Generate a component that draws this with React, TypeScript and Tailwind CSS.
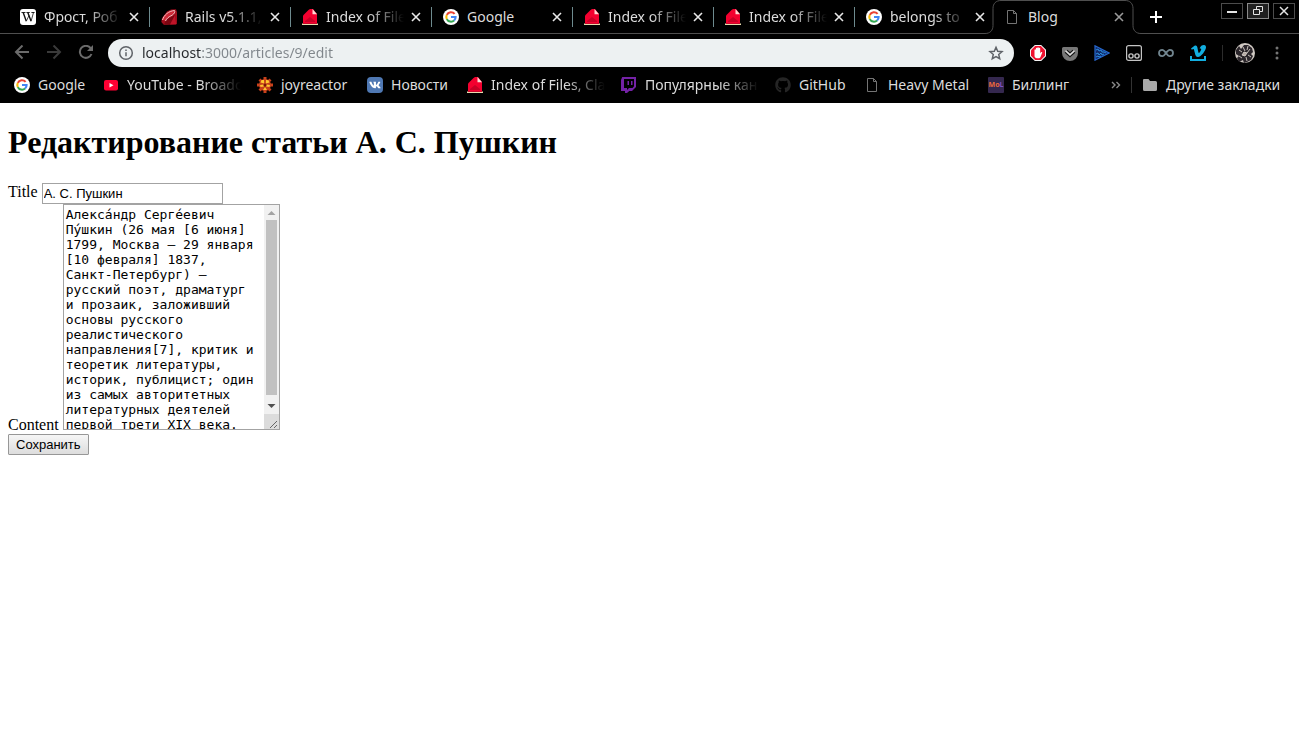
import type { ReactNode } from "react";
import { FaGithub, FaVk } from "react-icons/fa";

const ARTICLE = `Алекса́ндр Серге́евич Пу́шкин (26 мая [6 июня] 1799, Москва — 29 января [10 февраля] 1837, Санкт-Петербург) — русский поэт, драматург и прозаик, заложивший основы русского реалистического направления[7], критик и теоретик литературы, историк, публицист; один из самых авторитетных литературных деятелей первой трети XIX века.`;

function GoogleIcon() {
  return (
    <svg viewBox="0 0 16 16" className="size-4 shrink-0">
      <circle cx="8" cy="8" r="8" fill="#fff" />
      <g fill="none" strokeWidth="2.1">
        <path d="M11.6 4.9A4.7 4.7 0 0 0 3.8 5.9" stroke="#ea4335" />
        <path d="M3.8 5.9a4.7 4.7 0 0 0 0 4.2" stroke="#fbbc05" />
        <path d="M3.8 10.1a4.7 4.7 0 0 0 7.3 1.4" stroke="#34a853" />
        <path d="M11.1 11.5A4.6 4.6 0 0 0 12.6 8H8" stroke="#4285f4" />
      </g>
    </svg>
  );
}

function WikipediaIcon() {
  return (
    <svg viewBox="0 0 16 16" className="size-4 shrink-0">
      <rect width="16" height="16" rx="3" fill="#fff" />
      <g fill="none" stroke="#111">
        <path d="M1.5 3.5h4M6.4 3.5h3.4M11.4 3.5h3.2" strokeWidth="0.9" />
        <path d="M3.2 3.5 6.2 12M7.8 3.5 11 12" strokeWidth="1.4" />
        <path d="M6.2 12.4 9 6.5M11 12.4l2.5-8.9" strokeWidth="0.8" />
      </g>
    </svg>
  );
}

function RubyIcon() {
  return (
    <svg viewBox="0 0 16 16" className="size-4 shrink-0">
      <path d="M1 9 6 2.5 10 .5 15 .3 16 3v12L3 16 .3 13z" fill="#a00d1c" />
      <path d="M5 11 14 6l1.5 9L3 15.8z" fill="#7c0611" />
      <path d="m14 6-5 9.5h6.3z" fill="#be1428" />
      <path d="M1.500 10.500C4 4.500 7 2 13.500 1.500L12.500 5C9 6.500 6 9 4.500 12z" fill="#cf2a38" />
      <path d="M1.500 11C3 6 7.500 2 13.500 1.500c.8 1.500-.2 3.200-2.500 4.800C8 7.500 5.500 9.500 4.500 12" fill="none" stroke="#f4c5c5" />
    </svg>
  );
}

function HouseIcon() {
  return (
    <svg viewBox="0 0 16 16" className="size-4 shrink-0">
      <path d="M1 14V6.500L6.500 1 8 0h3l4 5v9z" fill="#f3002f" />
      <path d="m8 8 5 4v1H3v-1z" fill="#c80026" />
      <path d="M10.500 0 15 5.200h-4.500z" fill="#ffd9d5" />
      <path d="M0 14.500h16V16H0z" fill="#eadcae" />
      <path d="M1 14h14v1H1z" fill="#c9082b" />
    </svg>
  );
}

function FileIcon() {
  return (
    <svg viewBox="0 0 16 16" className="size-4 shrink-0" fill="none" stroke="#747474">
      <path d="M3.500 1.500h6l3 3v10h-9zM9.500 1.500v3h3" />
    </svg>
  );
}

function YouTubeIcon() {
  return (
    <svg viewBox="0 0 16 16" className="size-4 shrink-0">
      <rect x="1" y="3" width="14" height="10.500" rx="2" fill="#ff0033" />
      <path d="M6.500 6v4.500l4-2.200z" fill="#fff" />
    </svg>
  );
}

function JoyIcon() {
  return (
    <svg viewBox="0 0 16 16" className="size-4 shrink-0">
      <g fill="#c7411b">
        <circle cx="8" cy="8" r="6" />
        <path d="M6.500 0h3v3h-3zM6.500 13h3v3h-3zM0 6.500h3v3H0zM13 6.500h3v3h-3zM1.500 3.500l2-2 2 2-2 2zM10.500 3.500l2-2 2 2-2 2zM1.500 12.500l2-2 2 2-2 2zM10.500 12.500l2-2 2 2-2 2z" />
      </g>
      <g fill="#ffc82e">
        <path d="M7.200 6.500 3.500 5.500 4.500 3 7 3zM8.800 6.500 9 3l2.500.2 1 2.300zM7 9.500 3.500 10 3 8l3.500-.5zM9 9.500l3.500.5.5-2-3.500-.5zM8 10l2 3H6z" />
      </g>
      <circle cx="8" cy="8" r="1.500" fill="#7a160a" />
    </svg>
  );
}

function TwitchIcon() {
  return (
    <svg viewBox="0 0 16 16" className="size-4 shrink-0" fill="#7422a6">
      <path
        fillRule="evenodd"
        d="M1.200 0H15v10l-4 4H8.200L6 16H4v-2H0V3zM3 2v9h3v2l2-2h3.500L13 9.300V2zM6.500 4H8v4H6.500zM10 4h1.500v4H10z"
      />
    </svg>
  );
}

function VkIcon() {
  return (
    <span className="flex size-4 shrink-0 items-center justify-center rounded-sm bg-[#4f78b3]">
      <FaVk className="size-3 text-white" />
    </span>
  );
}

function BillingIcon() {
  return (
    <span className="flex size-4 shrink-0 items-center justify-center rounded-[1px] bg-[#35284f] text-[7px] leading-none font-bold">
      <span className="text-[#ef6a3b]">Mo</span>
      <span className="text-[#7d4fc4]">L</span>
    </span>
  );
}

function FolderIcon() {
  return (
    <svg viewBox="0 0 16 16" className="size-4 shrink-0" fill="#a9a9a9">
      <path d="M2 2h4.500l1.500 2h5.500a1.500 1.500 0 0 1 1.500 1.500v7a1.500 1.500 0 0 1-1.500 1.500H2.500A1.500 1.500 0 0 1 1 12.500V3a1 1 0 0 1 1-1z" />
    </svg>
  );
}

const TAB_FADE = "[mask-image:linear-gradient(to_right,black_55%,transparent)]";
const BOOKMARK_FADE = "[mask-image:linear-gradient(to_right,black_65%,transparent)]";

const tabs: { title: string; icon: ReactNode; fade?: boolean }[] = [
  { title: "Фрост, Роб", icon: <WikipediaIcon />, fade: true },
  { title: "Rails v5.1.1,", icon: <RubyIcon />, fade: true },
  { title: "Index of File", icon: <HouseIcon />, fade: true },
  { title: "Google", icon: <GoogleIcon /> },
  { title: "Index of File", icon: <HouseIcon />, fade: true },
  { title: "Index of File", icon: <HouseIcon />, fade: true },
  { title: "belongs to", icon: <GoogleIcon />, fade: true },
];

const bookmarks: { title: string; icon: ReactNode; width: string; fade?: boolean }[] = [
  { title: "Google", icon: <GoogleIcon />, width: "w-[73px]" },
  { title: "YouTube - Broadc", icon: <YouTubeIcon />, width: "w-[138px]", fade: true },
  { title: "joyreactor", icon: <JoyIcon />, width: "w-[94px]" },
  { title: "Новости", icon: <VkIcon />, width: "w-[84px]" },
  { title: "Index of Files, Cla", icon: <HouseIcon />, width: "w-[138px]", fade: true },
  { title: "Популярные кан", icon: <TwitchIcon />, width: "w-[138px]", fade: true },
  { title: "GitHub", icon: <FaGithub className="size-4 shrink-0 text-[#252525]" />, width: "w-[73px]" },
  { title: "Heavy Metal", icon: <FileIcon />, width: "w-[108px]" },
  { title: "Биллинг", icon: <BillingIcon />, width: "w-[84px]" },
];

function Close({ title, dim }: { title: string; dim?: boolean }) {
  return (
    <button type="button" aria-label={`Закрыть ${title}`} className={dim ? "shrink-0 text-[#9a9a9a]" : "shrink-0 text-[#e8e8e8]"}>
      <svg viewBox="0 0 12 12" className="size-3" stroke="currentColor" strokeWidth="1.600">
        <path d="m2 2 8 8M10 2l-8 8" />
      </svg>
    </button>
  );
}

function WindowButton({ label, active, children }: { label: string; active?: boolean; children: ReactNode }) {
  return (
    <button
      type="button"
      aria-label={label}
      className={`flex h-4 w-[22px] items-center justify-center border text-[#e4e4e4] ${active ? "border-[#8a8a8a] bg-[#202020]" : "border-[#4c4c4c]"}`}
    >
      <svg viewBox="0 0 12 12" className="size-3" fill="none" stroke="currentColor">
        {children}
      </svg>
    </button>
  );
}

function TabStrip() {
  return (
    <div className="flex h-[34px] border-b border-[#4f4f4f] pl-[9px]">
      {tabs.map((tab, i) => (
        <div key={i} className="flex max-w-[141px] min-w-0 flex-1 items-center">
          <div className="flex min-w-0 flex-1 items-center pr-[9px] pl-[11px]">
            {tab.icon}
            <span className={`mr-1.5 ml-2 min-w-0 flex-1 overflow-hidden whitespace-nowrap ${tab.fade ? TAB_FADE : ""}`}>{tab.title}</span>
            <Close title={tab.title} />
          </div>
          <span className={`h-5 w-px ${i < tabs.length - 1 ? "bg-[#6e8b8f]" : ""}`} />
        </div>
      ))}
      <div className="relative flex h-[34px] max-w-[141px] min-w-0 flex-1 items-center pr-3 pl-2">
        <svg viewBox="0 0 156 34" preserveAspectRatio="none" className="absolute top-0 -left-[11px] h-[34px] w-[156px]">
          <path d="M0 33.500c5 0 8-3 8-8v-17c0-5 3-8 8-8h124c5 0 8 3 8 8v17c0 5 3 8 8 8V34H0z" fill="#000" />
          <path d="M0 33.500c5 0 8-3 8-8v-17c0-5 3-8 8-8h124c5 0 8 3 8 8v17c0 5 3 8 8 8" fill="none" stroke="#4f4f4f" />
        </svg>
        <div className="relative flex min-w-0 flex-1 items-center">
          <FileIcon />
          <span className="mr-1.5 ml-2 min-w-0 flex-1 overflow-hidden whitespace-nowrap">Blog</span>
          <Close title="Blog" dim />
        </div>
      </div>
      <button type="button" aria-label="Новая вкладка" className="ml-3 shrink-0 text-white">
        <svg viewBox="0 0 14 14" className="size-3.5" stroke="currentColor" strokeWidth="2">
          <path d="M7 1v12M1 7h12" />
        </svg>
      </button>
      <div className="mt-[3px] mr-1 ml-auto flex shrink-0 gap-1">
        <WindowButton label="Свернуть">
          <path d="M1 7h10" strokeWidth="2" />
        </WindowButton>
        <WindowButton label="Развернуть" active>
          <path d="M1.500 4.500h6v5h-6zM4.500 4.500v-3h6v5h-3" />
        </WindowButton>
        <WindowButton label="Закрыть">
          <path d="m2 2 8 8M10 2l-8 8" strokeWidth="1.500" />
        </WindowButton>
      </div>
    </div>
  );
}

function Extensions() {
  return (
    <div className="flex shrink-0 items-center gap-4">
      <button type="button" aria-label="AdBlock">
        <svg viewBox="0 0 16 16" className="size-4">
          <path d="M4.800 0h6.400L16 4.800v6.400L11.200 16H4.800L0 11.200V4.800z" fill="#f4f4f4" />
          <path d="M5.200 1h5.600L15 5.200v5.600L10.800 15H5.200L1 10.800V5.200z" fill="#f0112f" />
          <path d="M4.500 5a.7.7 0 0 1 1.400 0V3.500a.7.7 0 0 1 1.400 0V3a.7.7 0 0 1 1.500 0v.5a.7.7 0 0 1 1.400 0v4.800l.8-1.100c.6-.7 1.500-.1 1.200.6l-1.700 4.200c-.4.800-1 1.300-2 1.300H7c-1.500 0-2.500-1-2.500-2.500z" fill="#fff" />
        </svg>
      </button>
      <button type="button" aria-label="Pocket">
        <svg viewBox="0 0 16 16" className="size-4">
          <path d="M1.500 2h13A1.500 1.500 0 0 1 16 3.500V8A8 8 0 0 1 0 8V3.500A1.500 1.500 0 0 1 1.500 2z" fill="#777" />
          <path d="m4 6.200 4 3.600 4-3.600" fill="none" stroke="#151515" strokeWidth="4" />
          <path d="m4 6.200 4 3.600 4-3.600" fill="none" stroke="#ddd" strokeWidth="1.600" strokeLinecap="round" />
        </svg>
      </button>
      <button type="button" aria-label="Плеер">
        <svg viewBox="0 0 16 16" className="size-4" fill="#122a6b">
          <path d="M1 .8 15 8 1 15.200z" stroke="#2668cf" strokeWidth="1.200" />
          <path d="m2 5 2-1 1 2 2-1 1 2 2 0 2 1M2 9l2-1 1 2 2-2 1 2 2-1M2 12l2-1 1 1 2-1" fill="none" stroke="#2c9ae8" strokeWidth=".9" />
        </svg>
      </button>
      <button type="button" aria-label="Tampermonkey">
        <svg viewBox="0 0 16 16" className="size-4" fill="none" stroke="#c4c4c4">
          <rect x=".6" y=".6" width="14.800" height="14.800" rx="2" strokeWidth="1.200" />
          <circle cx="5" cy="11" r="2.100" strokeWidth="1.400" />
          <circle cx="11" cy="11" r="2.100" strokeWidth="1.400" />
        </svg>
      </button>
      <button type="button" aria-label="Infinity">
        <svg viewBox="0 0 16 16" className="size-4" fill="none" stroke="#71858f" strokeWidth="1.800">
          <path d="M8 8C6.500 5.800 5.500 4.800 4.200 4.800a3.200 3.200 0 0 0 0 6.400C5.500 11.200 6.500 10.200 8 8s2.500-3.200 3.800-3.200a3.200 3.200 0 0 1 0 6.400C10.500 11.200 9.500 10.200 8 8z" />
        </svg>
      </button>
      <button type="button" aria-label="Vimeo">
        <svg viewBox="0 0 16 16" className="size-4" fill="#12aee0">
          <path d="M1 3.500 4.500.8c1.500-.8 2.500-.2 2.900 1.800.5 2.400.8 5.400 1.500 5.400.6 0 2.300-3 2.300-3.800 0-1-.8-.9-1.600-.6C10.500.9 12.200 0 14 .1c1.500.1 2 1.100 2 2.400C15.800 5.500 11 12 8 12c-2.200 0-2.600-1.900-3.200-4.300C4.200 5.300 4 3.900 3.400 3.900c-.4 0-1 .4-1.500.8z" />
          <path d="M0 11h2v3h12v-3h2v5H0z" />
        </svg>
      </button>
    </div>
  );
}

function Toolbar() {
  return (
    <div className="flex h-[38px] items-center pr-3.5 pl-3.5">
      <div className="flex shrink-0 items-center gap-4">
        <button type="button" aria-label="Назад" className="text-[#6b6b6b]">
          <svg viewBox="0 0 16 16" className="size-4" fill="none" stroke="currentColor" strokeWidth="2">
            <path d="M15 7H2M8.500 .5 2 7l6.500 6.500" />
          </svg>
        </button>
        <button type="button" aria-label="Вперёд" className="text-[#3a3a3a]">
          <svg viewBox="0 0 16 16" className="size-4" fill="none" stroke="currentColor" strokeWidth="2">
            <path d="M1 7h13M7.500 .5 14 7l-6.500 6.500" />
          </svg>
        </button>
        <button type="button" aria-label="Обновить" className="text-[#6b6b6b]">
          <svg viewBox="0 0 16 16" className="size-4" fill="none" stroke="currentColor" strokeWidth="2">
            <path d="M13.500 9A6 6 0 1 1 12.500 3L14 4.500" />
            <path d="M15 0v6H9z" fill="currentColor" stroke="none" />
          </svg>
        </button>
      </div>
      <div className="ml-3.5 flex h-7 min-w-0 flex-1 items-center rounded-full bg-[#edf1f2] pr-2.5 pl-2.5 text-[#5f6368]">
        <svg viewBox="0 0 16 16" className="size-4 shrink-0" fill="none" stroke="currentColor" strokeWidth="1.500">
          <circle cx="8" cy="8" r="6.300" />
          <path d="M8 7.200v4M8 4.500V6" />
        </svg>
        <input
          type="text"
          aria-label="Адрес"
          defaultValue="localhost:3000/articles/9/edit"
          className="ml-2 min-w-0 flex-1 bg-[linear-gradient(to_right,#25282b_59px,#80868b_59px)] bg-clip-text text-sm text-transparent outline-none"
        />
        <button type="button" aria-label="Добавить в закладки" className="shrink-0">
          <svg viewBox="0 0 16 16" className="size-4" fill="none" stroke="currentColor" strokeWidth="1.500">
            <path d="m8 2.300 1.700 4 4.300.4-3.300 2.800 1 4.200L8 11.500l-3.700 2.200 1-4.200L2 6.700l4.300-.4z" />
          </svg>
        </button>
      </div>
      <div className="ml-4 flex shrink-0 items-center">
        <Extensions />
        <span className="mx-4 h-4 w-px bg-[#2c2c2c]" />
        <button type="button" aria-label="Профиль" className="-ml-1">
          <svg viewBox="0 0 20 20" className="size-5">
            <circle cx="10" cy="10" r="10" fill="#cfc8c2" />
            <path d="M1 7 4 3l2 3 3-4 4 0 4 3 1 4-2 2 2 2-2 4-4 2-3 1-1-3-4 2-2-4 2-2-3-2z" fill="#2b262b" />
            <path d="M4 7l3 2M8 4l2 4M13 3l-1 4M15 6l-3 4M9 9l3 1-2 3-3-1zM4 13l3 2M13 12l3 2M11 14l1 4" fill="#b5aaa5" stroke="#d8d0ca" strokeWidth=".9" />
          </svg>
        </button>
        <button type="button" aria-label="Меню" className="ml-3.5">
          <svg viewBox="0 0 16 16" className="size-4" fill="#747474">
            <circle cx="8" cy="3" r="1.500" />
            <circle cx="8" cy="8" r="1.500" />
            <circle cx="8" cy="13" r="1.500" />
          </svg>
        </button>
      </div>
    </div>
  );
}

function Bookmarks() {
  return (
    <div className="flex h-[31px] items-center pr-3.5 pb-1.5 pl-3.5">
      <nav aria-label="Закладки" className="flex min-w-0 gap-4">
        {bookmarks.map((b) => (
          <a key={b.title} href="#" className={`flex shrink-0 items-center gap-2 whitespace-nowrap ${b.width}`}>
            {b.icon}
            <span className={b.fade ? `min-w-0 flex-1 overflow-hidden ${BOOKMARK_FADE}` : ""}>{b.title}</span>
          </a>
        ))}
      </nav>
      <div className="ml-auto flex shrink-0 items-center">
        <button type="button" aria-label="Ещё закладки" className="text-[#8a8a8a]">
          <svg viewBox="0 0 10 10" className="size-2.5" fill="none" stroke="currentColor" strokeWidth="1.400">
            <path d="m1 2 3 3-3 3M5.500 2l3 3-3 3" />
          </svg>
        </button>
        <span className="mx-2.5 h-4 w-px bg-[#333]" />
        <a href="#" className="flex w-[143px] items-center gap-2 whitespace-nowrap">
          <FolderIcon />
          <span>Другие закладки</span>
        </a>
      </div>
    </div>
  );
}

export default function App() {
  return (
    <div className="min-h-screen bg-white">
      <header className="bg-black font-['Noto_Sans',sans-serif] text-sm text-[#dcdcdc]">
        <TabStrip />
        <Toolbar />
        <Bookmarks />
      </header>
      <main className="px-2 pt-[21px] font-['Liberation_Serif',serif] text-base text-black">
        <h1 className="text-[32px] leading-[37px] font-bold">Редактирование статьи А. С. Пушкин</h1>
        <form className="mt-[22px]">
          <div className="flex items-start gap-1">
            <label htmlFor="title" className="leading-[18px]">Title</label>
            <input
              id="title"
              type="text"
              defaultValue="А. С. Пушкин"
              className="h-[21px] w-[181px] border border-[#a3a3a3] px-px font-['Liberation_Sans',sans-serif] text-[13px] outline-none"
            />
          </div>
          <div className="flex items-end gap-1">
            <label htmlFor="content" className="leading-2.5">Content</label>
            <div className="flex h-[226px] border border-[#a3a3a3]">
              <textarea
                id="content"
                defaultValue={ARTICLE}
                className="w-[200px] resize-none overflow-hidden py-0.5 pr-2 pl-0.5 font-['DejaVu_Sans_Mono',monospace] text-[13px] leading-[15px] outline-none"
              />
              <div aria-hidden="true" className="flex w-[15px] flex-col bg-[#f1f1f1]">
                <svg viewBox="0 0 15 15" className="h-[15px] w-full" fill="#a3a3a3">
                  <path d="M3.500 10 7.500 6l4 4z" />
                </svg>
                <div className="mx-0.5 flex-1 bg-[#c1c1c1]" />
                <svg viewBox="0 0 15 19" className="h-[19px] w-full" fill="#505050">
                  <path d="m3.500 9 4 4 4-4z" />
                </svg>
                <svg viewBox="0 0 15 15" className="h-[15px] w-full bg-[#dcdcdc]" stroke="#666" fill="none">
                  <path d="m6 14 7-7M10 14l3-3" />
                </svg>
              </div>
            </div>
          </div>
          <button
            type="submit"
            className="mt-1 h-[21px] rounded-[1px] border border-[#979797] bg-linear-to-b from-[#f6f6f6] to-[#dddddd] px-[7px] font-['Liberation_Sans',sans-serif] text-[13px] leading-none"
          >
            Сохранить
          </button>
        </form>
      </main>
    </div>
  );
}
